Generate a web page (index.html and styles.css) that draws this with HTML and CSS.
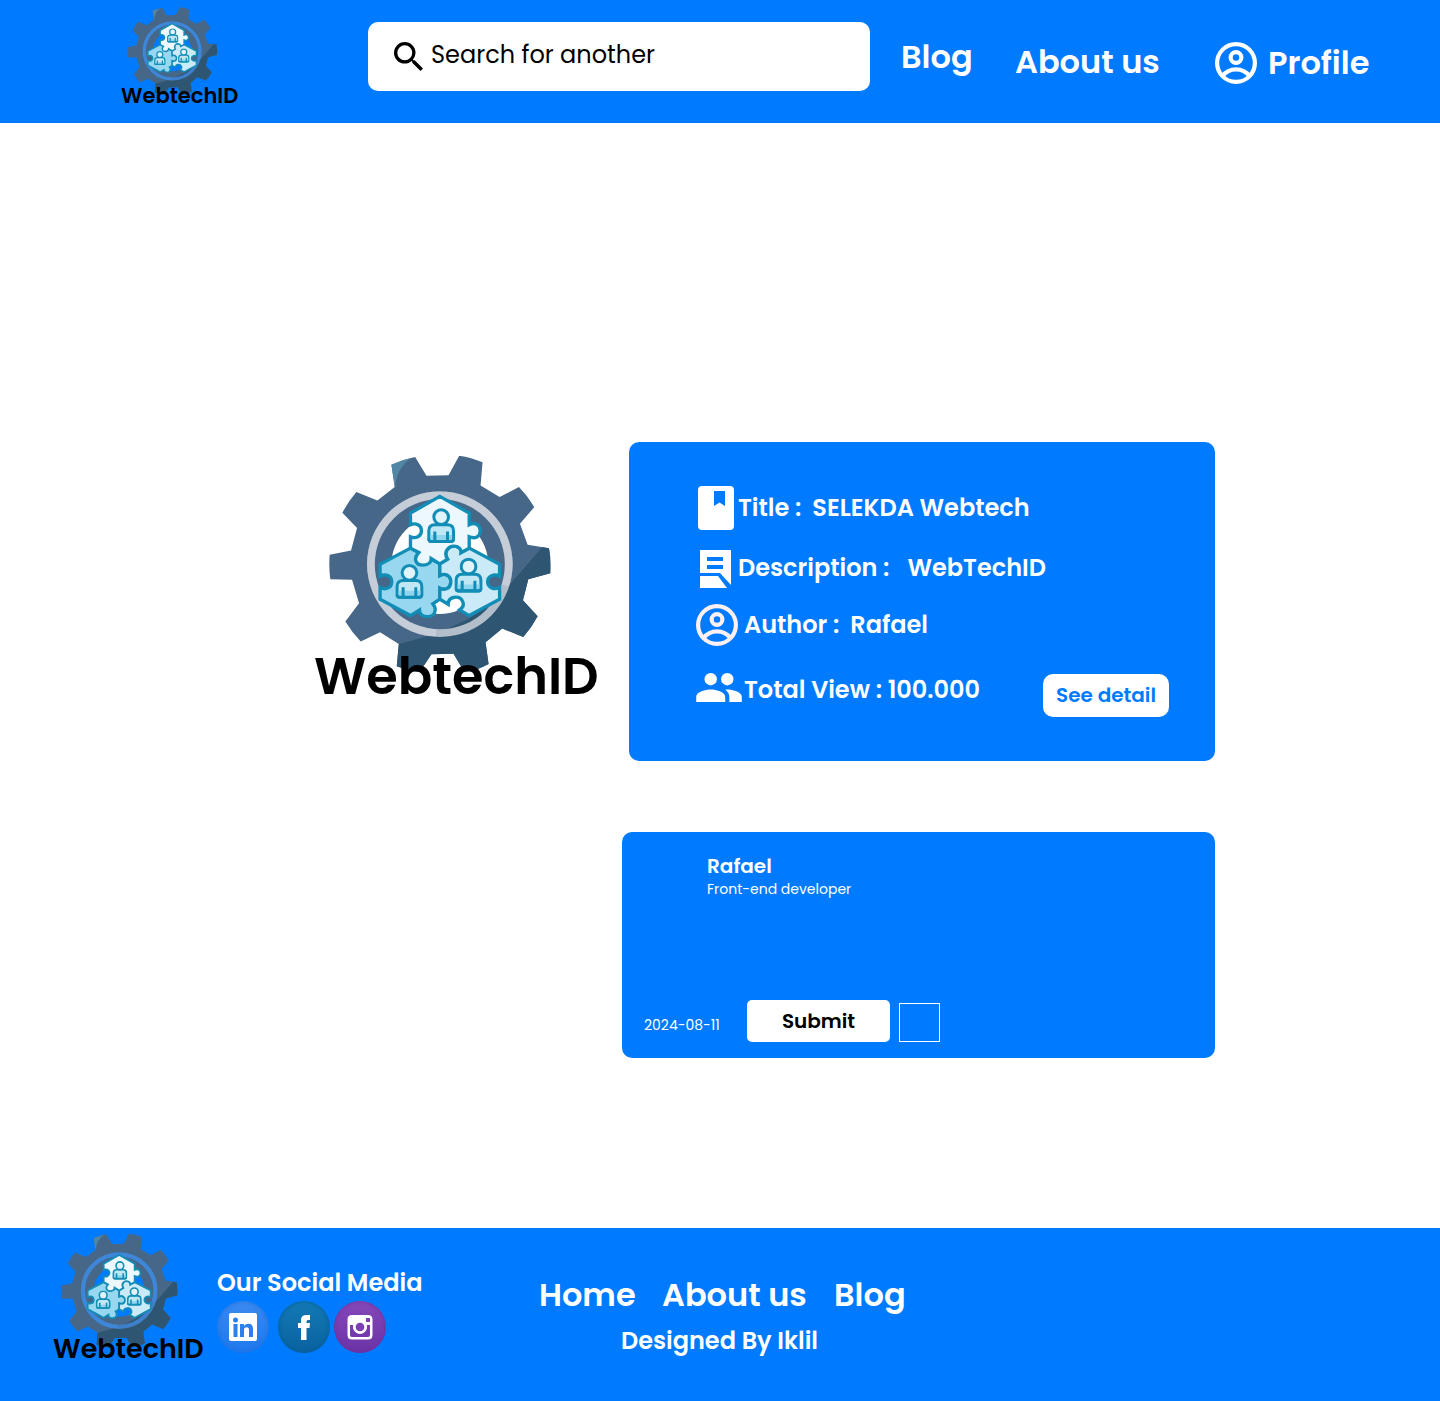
FILE: index.html
```html
<!DOCTYPE html>
<html lang="en">
<head>
<meta charset="utf-8">
<meta name="viewport" content="width=device-width, initial-scale=1">
<title>WebtechID</title>
<link rel="stylesheet" href="styles.css">
</head>
<body>
<svg class="sprite" aria-hidden="true">
  <defs>
    <clipPath id="gear-clip">
      <path clip-rule="evenodd" d="M246 60Q282 44 317 37L351 93 417 92 449 33Q486 38 519 53L513 122 570 157 628 127Q654 153 674 187L631 237 654 300 718 310Q725 347 722 385L656 403 640 466 684 514Q666 548 641 576L578 551 528 592 537 657Q503 676 465 682L432 626 366 628 330 682Q295 678 262 664L268 597 212 562 154 590Q128 563 108 530L149 475 128 405 63 403Q58 367 61 330L125 317 143 250 99 204Q117 170 141 142L204 167 256 127ZM173 358a218 218 0 1 0 436 0a218 218 0 1 0-436 0ZM196 358a195 195 0 1 0 390 0a195 195 0 1 0-390 0ZM246 360a145 147 0 1 0 290 0a145 147 0 1 0-290 0Z"/>
    </clipPath>
  </defs>
  <symbol id="person" viewBox="0 0 90 110">
    <path d="M8 92V68Q8 50 26 50H64Q82 50 82 68V92Q82 100 74 100H16Q8 100 8 92Z" fill="#bfe7f4" stroke="#128db6" stroke-width="9"/>
    <path d="M12 81H78V95H12Z" fill="#8fd5ee"/>
    <path d="M26 97V70M64 97V70M8 92Q8 100 16 100H74Q82 100 82 92" fill="none" stroke="#128db6" stroke-width="9"/>
    <circle cx="45" cy="27" r="22" fill="#e1f4fb" stroke="#128db6" stroke-width="9"/>
  </symbol>
  <symbol id="gear" viewBox="50 25 680 665">
    <g clip-path="url(#gear-clip)">
      <path d="M50 25H730V690H50Z" fill="#476788"/>
      <path d="M240 55L308 38Q262 68 257 128L240 130Z" fill="#5186a5"/>
      <path d="M730 300H704Q630 385 600 420Q500 545 268 597L240 700H740Z" fill="#2e5672"/>
    </g>
    <circle cx="391" cy="358" r="206" fill="none" stroke="#8495ac" stroke-opacity=".47" stroke-width="24"/>
    <path d="M587 422A206 206 0 0 1 380 564" fill="none" stroke="#2e5672" stroke-opacity=".12" stroke-width="24"/>
    <g stroke="#128db6" stroke-width="10" stroke-linejoin="miter">
      <path fill="#97d8f0" d="M303 310L212 358V394C228 386 247 392 247 411S228 436 212 428V463L303 512 330 495C330 510 342 515 355 515C376 515 384 493 370 477L391 463V430C408 438 424 430 424 411S407 384 391 392V357L340 330Z"/>
      <path fill="#c9eaf6" d="M391 357L414 343C399 319 420 302 435 304C448 305 456 315 455 323L479 310 570 358V394C554 386 534 393 534 411S554 436 570 428V463L479 512 450 495C472 480 458 456 437 457C424 458 416 466 416 478L391 463V430C408 438 424 430 424 411S407 384 391 392Z"/>
      <path fill="#ecf7fe" d="M391 155L479 205V240C496 232 512 240 512 258S497 283 479 276V310L455 323C456 315 448 305 435 304C420 302 399 319 414 343L391 357 365 341C365 356 352 361 340 361C319 361 310 341 328 323L303 310V276C318 282 336 276 336 258S319 233 303 240V205Z"/>
    </g>
    <use href="#person" x="350" y="190" width="90" height="110"/>
    <use href="#person" x="255" y="357" width="90" height="110"/>
    <use href="#person" x="432" y="338" width="90" height="110"/>
  </symbol>
  <symbol id="account" viewBox="2 2 20 20">
    <g fill="none" stroke="currentColor" stroke-width="2">
      <circle cx="12" cy="12" r="9"/>
      <circle cx="12" cy="9.400" r="2.550"/>
      <path d="M5.600 18.200A8 8 0 0 1 18.400 18.200"/>
    </g>
  </symbol>
</svg>

<header class="header">
  <a class="logo logo--small" href="#">
    <svg class="logo__gear" aria-hidden="true"><use href="#gear"/></svg>
    <span class="logo__name">WebtechID</span>
  </a>
  <form class="search">
    <svg class="search__icon" viewBox="3 3 17.500 17.500" aria-hidden="true"><path d="M15.500 14h-.79l-.28-.27A6.470 6.470 0 0 0 16 9.500A6.500 6.500 0 1 0 9.500 16c1.610 0 3.090-.59 4.230-1.570l.27.28v.79l5 4.990L20.490 19l-4.990-5Zm-6 0a4.500 4.500 0 1 1 0-9a4.500 4.500 0 0 1 0 9Z"/></svg>
    <input class="search__input" type="search" aria-label="Search" placeholder="Search for another">
  </form>
  <a class="link header__blog" href="#">Blog</a>
  <a class="link" href="#">About us</a>
  <a class="link header__profile" href="#"><svg class="header__avatar" aria-hidden="true"><use href="#account"/></svg>Profile</a>
</header>

<main class="main">
  <section class="project">
    <div class="logo logo--large">
      <svg class="logo__gear" aria-hidden="true"><use href="#gear"/></svg>
      <span class="logo__name">WebtechID</span>
    </div>
    <ul class="details">
      <li class="details__row">
        <svg class="details__icon" viewBox="0 0 40 44" aria-hidden="true"><path fill="#fff" fill-rule="evenodd" d="M6 0H34Q38 0 38 4V40Q38 44 34 44H6Q2 44 2 40V4Q2 0 6 0ZM18 5V20L23.500 16.500 29 20V5Z"/></svg>
        <span>Title :</span><span class="details__value">SELEKDA Webtech</span>
      </li>
      <li class="details__row">
        <svg class="details__icon" viewBox="0 0 40 44" aria-hidden="true"><path fill="#fff" fill-rule="evenodd" d="M4 4H35V39L24 27H4ZM11 11V15H27V11ZM11 19V23H27V19ZM4 30H22L31 42H4Z"/></svg>
        <span>Description :</span><span class="details__value details__value--far">WebTechID</span>
      </li>
      <li class="details__row details__row--author">
        <svg class="details__icon details__icon--author" aria-hidden="true"><use href="#account"/></svg>
        <span>Author :</span><span class="details__value">Rafael</span>
      </li>
      <li class="details__row details__row--views">
        <svg class="details__icon details__icon--views" viewBox="1 5 22 14" aria-hidden="true"><path fill="#fff" d="M16 11a3 3 0 1 0 0-6a3 3 0 0 0 0 6ZM8 11a3 3 0 1 0 0-6a3 3 0 0 0 0 6ZM8 13c-2.330 0-7 1.170-7 3.500V19h14v-2.500c0-2.330-4.670-3.500-7-3.500ZM16 13c-.29 0-.62.02-.97.05C16.190 13.890 17 15.020 17 16.500V19h6v-2.500c0-2.330-4.670-3.500-7-3.500Z"/></svg>
        <span>Total View : 100.000</span>
        <button class="details__button" type="button">See detail</button>
      </li>
    </ul>
  </section>

  <form class="comment">
    <div class="comment__author">
      <h2 class="comment__name">Rafael</h2>
      <p class="comment__role">Front-end developer</p>
    </div>
    <div class="comment__actions">
      <time class="comment__date" datetime="2024-08-11">2024-08-11</time>
      <button class="comment__submit" type="submit">Submit</button>
      <input class="comment__check" type="checkbox" aria-label="Select comment">
    </div>
  </form>
</main>

<footer class="footer">
  <a class="logo logo--medium" href="#">
    <svg class="logo__gear" aria-hidden="true"><use href="#gear"/></svg>
    <span class="logo__name">WebtechID</span>
  </a>
  <section class="social">
    <h2 class="social__title">Our Social Media</h2>
    <div class="social__links">
      <a class="social__link social__link--linkedin" href="#" aria-label="LinkedIn">
        <svg viewBox="0 0 52 52"><rect x="12" y="12" width="28" height="28" rx="2" fill="#fff"/><circle cx="18.500" cy="19" r="2.500" fill="#2b80ee"/><path fill="#2b80ee" d="M16.500 23H20.500V36H16.500ZM23 23H27V25Q28.500 22.700 31.500 22.700Q36 22.700 36 28V36H32V29Q32 26.200 29.700 26.200Q27 26.200 27 29V36H23Z"/></svg>
      </a>
      <a class="social__link social__link--facebook" href="#" aria-label="Facebook">
        <svg viewBox="0 0 52 52"><path fill="#fff" d="M23 39V27H20V22H23V19Q23 14 28.500 14H32V19H30Q28.500 19 28.500 20.500V22H32L31.500 27H28.500V39Z"/></svg>
      </a>
      <a class="social__link social__link--instagram" href="#" aria-label="Instagram">
        <svg viewBox="0 0 52 52"><path fill="#fff" fill-rule="evenodd" d="M18 14H34Q38.500 14 38.500 18.500V34Q38.500 38.500 34 38.500H18Q13.500 38.500 13.500 34V18.500Q13.500 14 18 14ZM32 17V21H36V17ZM16 24V34Q16 36 18 36H34Q36 36 36 34V24H32.800A7 7 0 1 1 19.200 24Z"/><circle cx="26" cy="26" r="5.600" fill="#7b3fb4" stroke="#fff" stroke-width="2.500"/></svg>
      </a>
    </div>
  </section>
  <div class="footer__center">
    <nav class="footer__nav">
      <a class="link" href="#">Home</a>
      <a class="link" href="#">About us</a>
      <a class="link" href="#">Blog</a>
    </nav>
    <p class="footer__credit">Designed By Iklil</p>
  </div>
</footer>
</body>
</html>
```

FILE: styles.css
```css
*, *::before, *::after { box-sizing: border-box; }

:root {
  --blue: #007bff;
}

body {
  margin: 0;
  background: #fff;
  color: #000;
  font-family: Poppins, Inter, "Open Sans", sans-serif;
  font-weight: 600;
}

h2, p, ul { margin: 0; padding: 0; }
svg { display: block; flex: none; }
a { color: inherit; text-decoration: none; }
button, input { margin: 0; font: inherit; }

.sprite { position: absolute; width: 0; height: 0; }

.link {
  color: #fff;
  font-size: 32px;
  line-height: 48px;
  white-space: nowrap;
}

/* Logo: the name is set over the bottom teeth of the gear */
.logo { display: block; color: #000; white-space: nowrap; }
.logo__name { display: block; position: relative; }

.logo--small { font-size: 21px; line-height: 24px; }
.logo--small .logo__gear { width: 92px; height: 90px; margin: 0 0 -12px 5px; }

.logo--medium { font-size: 27px; line-height: 32px; }
.logo--medium .logo__gear { width: 120px; height: 117px; margin: 0 0 -16px 6px; }

.logo--large { font-size: 51px; line-height: 60px; }
.logo--large .logo__gear { width: 227px; height: 222px; margin: 0 0 -29px 12px; }

.header {
  display: grid;
  grid-template-columns: 247px minmax(200px, 1fr) 114px 200px 155px;
  align-items: center;
  padding: 0 70px 0 121px;
  min-height: 123px;
  background: var(--blue);
}
.header .logo { align-self: start; padding-top: 6px; }

.search {
  display: flex;
  align-items: center;
  align-self: start;
  height: 69px;
  margin: 22px 31px 0 0;
  padding: 0 26px;
  border-radius: 10px;
  background: #fff;
}
.search__icon { width: 29px; height: 29px; }
.search__input {
  flex: 1;
  min-width: 0;
  padding: 0 0 4px 8px;
  border: 0;
  outline: 0;
  background: none;
  font-size: 24px;
  font-weight: 400;
  appearance: none;
}
.search__input::placeholder { color: #000; opacity: 1; }

.header__blog { align-self: start; margin-top: 33px; }
.header__profile { display: flex; align-items: center; gap: 11px; padding-top: 2px; }
.header__avatar { width: 42px; height: 42px; }

.main { padding: 319px 225px 170px 314px; }

.project { display: flex; align-items: flex-start; gap: 30px; }
.project .logo { flex: none; width: 285px; padding-top: 11px; }

.details {
  flex: 1;
  padding: 36px 46px 44px 67px;
  border-radius: 10px;
  background: var(--blue);
  color: #fff;
  font-size: 24px;
  list-style: none;
}
.details__row { display: flex; align-items: center; line-height: 60px; white-space: nowrap; }
.details__row--author { line-height: 54px; }
.details__row--views { align-items: flex-end; height: 65px; line-height: 54px; }
.details__icon { width: 40px; height: 44px; margin-right: 2px; }
.details__icon--author { width: 42px; height: 42px; margin-right: 6px; color: #fff0f3; }
.details__icon--views { width: 46px; height: 29px; margin: 0 2px 15px 0; }
.details__value { margin-left: 11px; }
.details__value--far { margin-left: 18px; }
.details__button {
  height: 43px;
  margin-left: auto;
  padding: 0 13px;
  border: 0;
  border-radius: 10px;
  background: #fff;
  color: var(--blue);
  font-size: 20px;
  line-height: 43px;
}

.comment {
  display: flex;
  flex-direction: column;
  justify-content: space-between;
  min-height: 226px;
  margin: 71px 0 0 308px;
  padding: 22px 22px 16px;
  border-radius: 10px;
  background: var(--blue);
  color: #fff;
}
.comment__author { padding-left: 63px; }
.comment__name { font-size: 20px; font-weight: 600; line-height: 25px; }
.comment__role { font-size: 14px; font-weight: 400; line-height: 20px; }
.comment__actions { display: grid; grid-template-columns: 103px 143px 50px; align-items: end; }
.comment__date { font-size: 14px; font-weight: 400; line-height: 34px; }
.comment__submit {
  height: 42px;
  border: 0;
  border-radius: 5px;
  background: #fff;
  color: #000;
  font-size: 20px;
}
.comment__check {
  width: 41px;
  height: 39px;
  margin-left: 9px;
  border: 1px solid #fff;
  appearance: none;
}

.footer {
  display: grid;
  grid-template-columns: 164px 322px 1fr;
  align-items: start;
  min-height: 173px;
  padding-left: 53px;
  background: var(--blue);
  color: #fff;
}
.footer .logo { padding-top: 4px; }

.social { padding-top: 37px; }
.social__title { font-size: 24px; font-weight: 600; line-height: 36px; }
.social__links { display: flex; gap: 4px; }
.social__link { width: 52px; height: 52px; border-radius: 50%; }
.social__link--linkedin { margin-right: 5px; background: linear-gradient(#3b8af0, #1f78ee); box-shadow: inset 0 0 5px #1b70dd; }
.social__link--facebook { background: linear-gradient(#127ab5, #0a62a0); box-shadow: inset 0 0 5px #0a5c96; }
.social__link--instagram { background: linear-gradient(#8748b9, #6b33a8); box-shadow: inset 0 0 5px #6a329c; }

.footer__center { width: 361px; padding-top: 43px; }
.footer__nav { display: grid; grid-template-columns: 123px 172px auto; }
.footer__credit { font-size: 24px; line-height: 44px; text-align: center; }
```
